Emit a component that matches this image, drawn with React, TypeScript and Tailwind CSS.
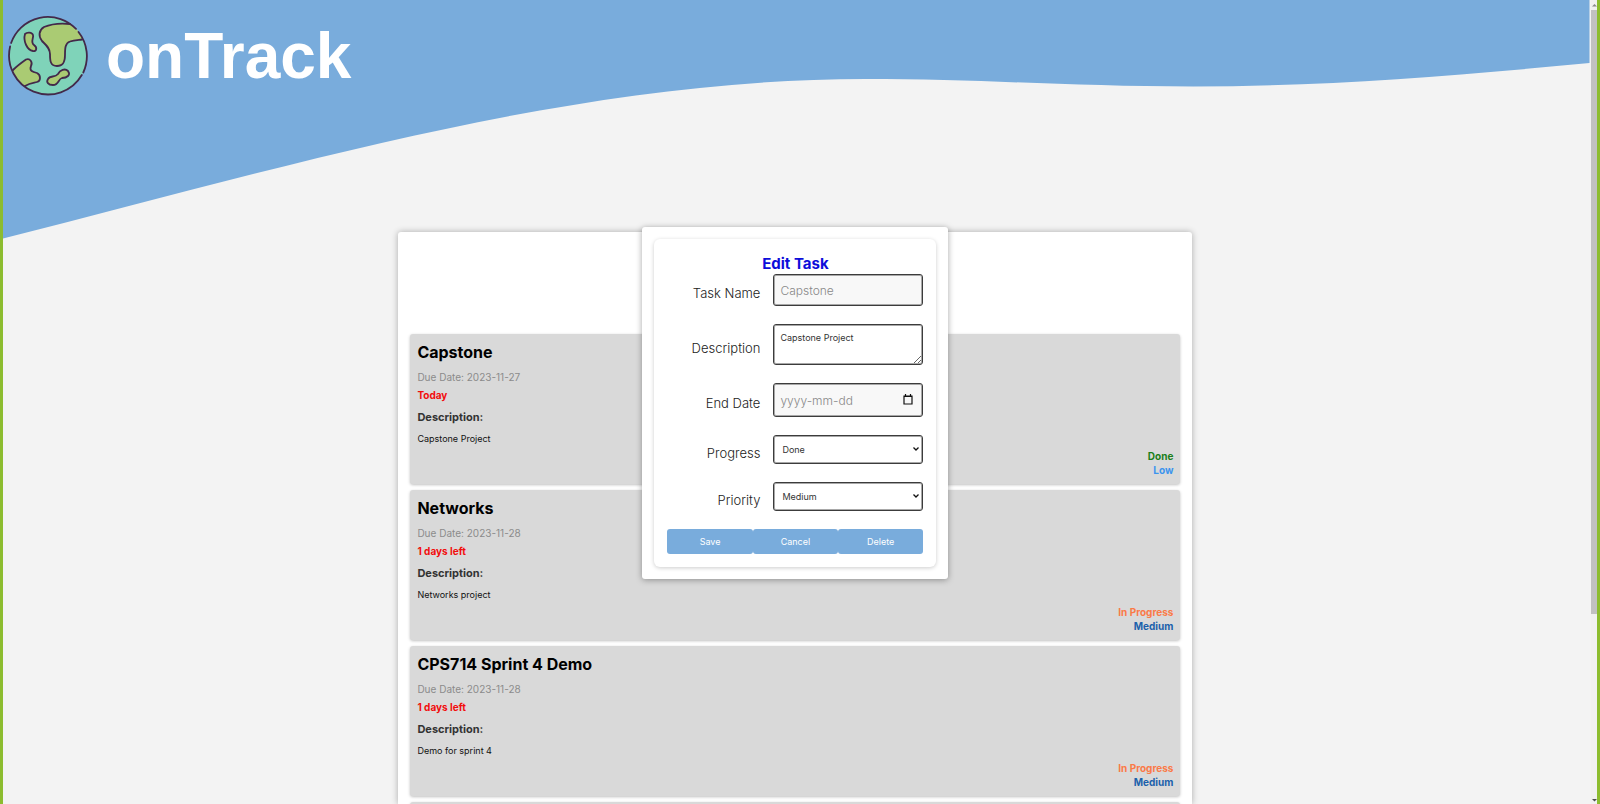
import React from 'react';

type Task = {
  name: string;
  due: string;
  left: string;
  description: string;
  progress: string;
  progressClass: string;
  priority: string;
  priorityClass: string;
};

const tasks: Task[] = [
  { name: 'Capstone', due: '2023-11-27', left: 'Today', description: 'Capstone Project', progress: 'Done', progressClass: 'text-[#1a7f1a]', priority: 'Low', priorityClass: 'text-[#3b94ee]' },
  { name: 'Networks', due: '2023-11-28', left: '1 days left', description: 'Networks project', progress: 'In Progress', progressClass: 'text-[#fb7a47]', priority: 'Medium', priorityClass: 'text-[#1c61ab]' },
  { name: 'CPS714 Sprint 4 Demo', due: '2023-11-28', left: '1 days left', description: 'Demo for sprint 4', progress: 'In Progress', progressClass: 'text-[#fb7a47]', priority: 'Medium', priorityClass: 'text-[#1c61ab]' },
];

function Globe() {
  return (
    <svg viewBox="0 0 80 80" className="size-20" aria-hidden="true" fill="none" stroke="#43294a" strokeWidth="1.8" strokeLinecap="round" strokeLinejoin="round">
      <circle cx="40" cy="40" r="39" fill="#7fd3b9" stroke="none" />
      <path d="M62 8 C53 7 43 8 36 11 C31 14 30 20 34 25 C38 29 42 32 42 38 C42 44 42 50 49 50 C56 50 57 45 57 39 C57 33 57 27 62 25.500 C66 24 70 24 75 22 C72 16 68 12 62 8Z" fill="#aacb73" stroke="none" />
      <path d="M62 8 C53 7 43 8 36 11 C31 14 30 20 34 25 C38 29 42 32 42 38 C42 44 42 50 49 50 C56 50 57 45 57 39 C57 33 57 27 62 25.500 C66 24 70 24 74 23.500" />
      <path d="M17 18 C19 16 24 16 25 19 C26 22 22 26 26 29 C30 32 28 36 25 35 C19 34 15 25 17 18Z" fill="#aacb73" />
      <path d="M5 54 C9 50 13 47 18 43.500 C22 42 25 46 23 50 C21 55 25 56 29 57 C33 59 33 65 29 66 C25 67 22 67 17 70 C11 66 7 60 5 54Z" fill="#aacb73" stroke="none" />
      <path d="M5 54 C9 50 13 47 18 43.500 C22 42 25 46 23 50 C21 55 25 56 29 57 C33 59 33 65 29 66 C25 67 22 67 17 70" />
      <path d="M40 63 C42 59 47 62 50 58 C52 54 57 52 60 55 C63 59 59 62 54 62 C50 63 51 69 45 69 C40 69 38 66 40 63Z" fill="#aacb73" />
      <path d="M68 12.900 A39 39 0 0 0 3.100 27" />
      <path d="M2.100 30.500 A39 39 0 0 0 73.800 59" />
      <path d="M70.500 16 A39 39 0 0 1 75.300 56.500" />
    </svg>
  );
}

function TaskCard({ task }: { task: Task }) {
  return (
    <article className="flex h-[150px] shrink-0 flex-col justify-between rounded-[3px] bg-[#d9d9d9] px-[7px] pt-1 pb-[7px] shadow-[0_1px_3px_rgba(0,0,0,0.25)]">
      <div>
        <h2 className="text-base leading-7 font-bold text-black">{task.name}</h2>
        <p className="text-[10px] leading-[22px] text-[#8b8b8b]">Due Date: {task.due}</p>
        <p className="text-[10px] leading-[14px] font-bold text-[#f20d0d]">{task.left}</p>
        <h3 className="text-[11px] leading-[30px] font-bold text-[#333]">Description:</h3>
        <p className="text-[9px] leading-[14px] text-[#111]">{task.description}</p>
      </div>
      <div className="-mt-4 text-right text-[10px] leading-[14px] font-bold">
        <p className={task.progressClass}>{task.progress}</p>
        <p className={task.priorityClass}>{task.priority}</p>
      </div>
    </article>
  );
}

const labelClass = 'pt-2 pr-px text-right text-[13px] font-light text-[#222]';
const boxClass = 'w-full rounded-[3px] border border-[#3c3c3c] text-[#333] shadow-[inset_0_0_0_1px_#a8a8a8]';
const buttonClass = 'h-[25px] flex-1 rounded-[3px] bg-[#79acdc] text-[9px] text-white';

function EditTask() {
  return (
    <div role="dialog" aria-labelledby="edit-title" className="absolute top-[227px] left-[49.9%] w-[306px] -translate-x-1/2 rounded-[3px] bg-white p-3 shadow-[0_1px_6px_rgba(0,0,0,0.35)]">
      <form className="rounded-md p-[13px] shadow-[0_1px_4px_rgba(0,0,0,0.2)]" onSubmit={(e) => e.preventDefault()}>
        <h2 id="edit-title" className="pt-0.5 text-center text-[15px] leading-5 font-bold text-[#0d0dda]">Edit Task</h2>
        <div className="grid grid-cols-[1fr_150px] items-center gap-x-3 gap-y-[18px]">
          <label htmlFor="name" className={labelClass}>Task Name</label>
          <input id="name" placeholder="Capstone" className={`${boxClass} h-8 bg-[#f8f8f8] px-1.5 text-xs font-light placeholder:text-[#888]`} />
          <label htmlFor="description" className={labelClass}>Description</label>
          <textarea id="description" defaultValue="Capstone Project" className={`${boxClass} block h-[41px] bg-white px-1.5 py-[7px] text-[9px] leading-3`} />
          <label htmlFor="end" className={labelClass}>End Date</label>
          <div className="relative">
            <input id="end" placeholder="yyyy-mm-dd" className={`${boxClass} block h-[34px] bg-[#f8f8f8] px-1.5 text-xs font-light placeholder:text-[#888]`} />
            <svg viewBox="0 0 10 11" className="absolute top-[11px] right-2.5 h-[11px] w-2.5" aria-hidden="true">
              <path d="M1 2 H9 V10 H1Z M0.500 2.500 H9.500 M2.500 0 V2 M7.500 0 V2" fill="none" stroke="#111" strokeWidth="1.200" />
            </svg>
          </div>
          <label htmlFor="progress" className={labelClass}>Progress</label>
          <Select id="progress" value="Done" options={['To Do', 'In Progress', 'Done']} />
          <label htmlFor="priority" className={labelClass}>Priority</label>
          <Select id="priority" value="Medium" options={['Low', 'Medium', 'High']} />
        </div>
        <div className="mt-[18px] flex">
          <button type="submit" className={buttonClass}>Save</button>
          <button type="button" className={buttonClass}>Cancel</button>
          <button type="button" className={buttonClass}>Delete</button>
        </div>
      </form>
    </div>
  );
}

function Select({ id, value, options }: { id: string; value: string; options: string[] }) {
  return (
    <div className="relative">
      <select id={id} defaultValue={value} className={`${boxClass} block h-[29px] appearance-none bg-white px-2 text-[9px]`}>
        {options.map((o) => (
          <option key={o}>{o}</option>
        ))}
      </select>
      <svg viewBox="0 0 6 4" className="pointer-events-none absolute top-3 right-1 h-1 w-1.5" aria-hidden="true">
        <path d="M0.500 0.500 L3 3 L5.500 0.500" fill="none" stroke="#111" strokeWidth="1.300" />
      </svg>
    </div>
  );
}

export default function App() {
  return (
    <div className="flex h-screen overflow-hidden border-x-3 border-[#8cbc2f] bg-[#f3f3f3] font-[Inter,sans-serif]">
      <main className="relative flex min-w-0 flex-1 flex-col">
        <svg viewBox="0 0 1588 240" preserveAspectRatio="none" className="absolute top-0 left-0 h-60 w-full" aria-hidden="true">
          <path d="M0 0 H1586.500 V63 C1450 76 1320 86.500 1190 86.500 C1070 86.500 980 79 862 79 C570 79 280 168 0 238.500Z" fill="#79acdc" />
        </svg>
        <header className="relative flex h-[232px] shrink-0 items-start gap-[18px] px-[5px] pt-4">
          <Globe />
          <h1 className="text-[64px] leading-[80px] font-bold text-white font-['Liberation_Sans',sans-serif]">onTrack</h1>
        </header>
        <section className="relative ml-[24.9%] flex min-h-0 w-1/2 flex-1 flex-col gap-1.5 overflow-hidden rounded-t-[3px] bg-white px-3 pt-[102px] shadow-[0_0_6px_rgba(0,0,0,0.3)]">
          {tasks.map((t) => (
            <TaskCard key={t.name} task={t} />
          ))}
          <article className="h-[150px] shrink-0 rounded-[3px] bg-[#d9d9d9] shadow-[0_1px_3px_rgba(0,0,0,0.25)]" />
        </section>
        <EditTask />
      </main>
      <div className="flex w-1.5 flex-col items-center bg-[#f1f1f1]" aria-hidden="true">
        <svg viewBox="0 0 6 10" className="h-2.5 w-1.5"><path d="M1 6.500 L3.500 4 L6 6.500Z" fill="#8a8a8a" /></svg>
        <div className="h-[604px] w-full bg-[#c1c1c1]" />
        <svg viewBox="0 0 6 10" className="mt-auto h-2.5 w-1.5"><path d="M1 5 H6 L3.500 7.500Z" fill="#505050" /></svg>
      </div>
    </div>
  );
}
